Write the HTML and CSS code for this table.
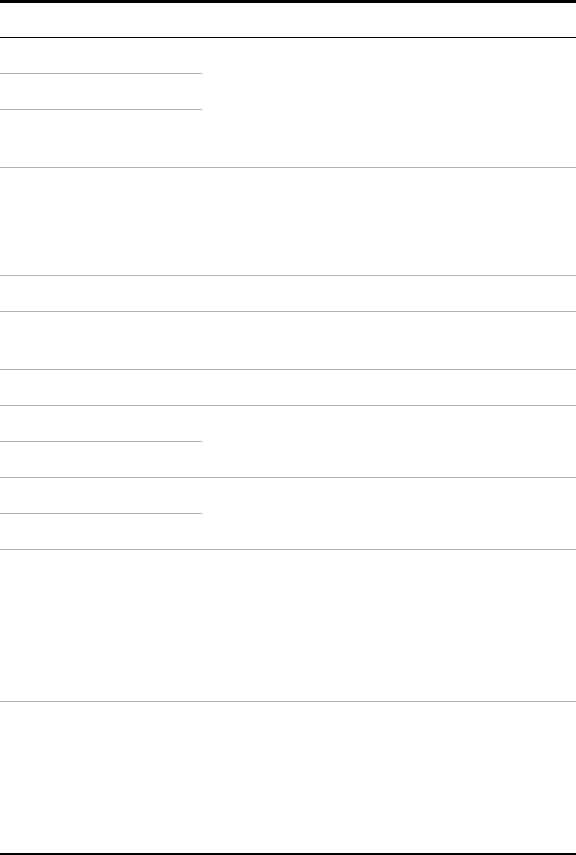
FILE: index.html
```html
<!DOCTYPE html>
<html>
<head>
<meta charset="utf-8">
<link rel="stylesheet" href="styles.css">
</head>
<body>
<div class="sheet">
  <div class="head"></div>
  <div class="group">
    <div class="left">
      <div class="cell h36"></div>
      <div class="cell h36"></div>
      <div class="cell h58"></div>
    </div>
    <div class="right"></div>
  </div>
  <div class="row h108"></div>
  <div class="row h36"></div>
  <div class="row h58"></div>
  <div class="row h36"></div>
  <div class="group">
    <div class="left">
      <div class="cell h36"></div>
      <div class="cell h36"></div>
    </div>
    <div class="right"></div>
  </div>
  <div class="group">
    <div class="left">
      <div class="cell h36"></div>
      <div class="cell h36"></div>
    </div>
    <div class="right"></div>
  </div>
  <div class="row h152"></div>
  <div class="row last"></div>
</div>
</body>
</html>
```
FILE: styles.css
```css
* { box-sizing: border-box; }
html, body { margin: 0; padding: 0; background: #fff; }
body { font-family: "Liberation Sans", Arial, sans-serif; }
.sheet {
  width: 576px;
  display: flex;
  flex-direction: column;
  border-bottom: 2px solid #000;
}
.head {
  height: 38px;
  border-top: 3px solid #000;
  border-bottom: 1px solid #000;
}
.group {
  display: flex;
  border-bottom: 1px solid #b3b3b3;
}
.left {
  width: 202px;
  display: flex;
  flex-direction: column;
}
.left .cell { border-bottom: 1px solid #b3b3b3; }
.left .cell:last-child { border-bottom: none; }
.left .cell.h36:last-child { height: 35px; }
.left .cell.h58:last-child { height: 57px; }
.right { flex: 1; }
.row { border-bottom: 1px solid #b3b3b3; }
.h36 { height: 36px; }
.h58 { height: 58px; }
.h108 { height: 108px; }
.h152 { height: 152px; }
.row.last { height: 151px; border-bottom: none; }
```
